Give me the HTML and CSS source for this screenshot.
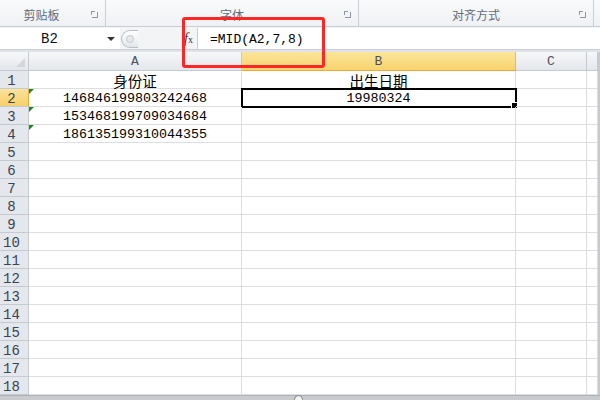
FILE: index.html
```html
<!DOCTYPE html>
<html lang="zh">
<head>
<meta charset="utf-8">
<link rel="stylesheet" href="styles.css">
</head>
<body>
<div class="app">
  <div class="ribbon">
    <div class="grp g1"><span class="glabel">剪贴板</span><span class="launch"></span></div>
    <div class="grp g2"><span class="glabel">字体</span><span class="launch"></span></div>
    <div class="grp g3"><span class="glabel">对齐方式</span><span class="launch"></span></div>
    <div class="grp g4"></div>
  </div>
  <div class="fbar">
    <div class="namebox"><span class="nbtext">B2</span><span class="caret"></span></div>
    <div class="mid">
      <span class="grip"><span class="gripdot"></span></span>
      <span class="fx"><i>f</i><small>x</small></span>
    </div>
    <div class="formula">=MID(A2,7,8)</div>
  </div>
  <div class="gap"></div>
  <div class="sheet">
    <div class="corner"></div><div class="ch">A</div><div class="ch sel">B</div><div class="ch">C</div><div class="ch"></div>

    <div class="rh">1</div><div class="c cj">身份证</div><div class="c cj">出生日期</div><div class="c"></div><div class="c"></div>
    <div class="rh sel">2</div><div class="c num tri">146846199803242468</div><div class="c num active">19980324</div><div class="c"></div><div class="c"></div>
    <div class="rh">3</div><div class="c num tri">153468199709034684</div><div class="c"></div><div class="c"></div><div class="c"></div>
    <div class="rh">4</div><div class="c num tri">186135199310044355</div><div class="c"></div><div class="c"></div><div class="c"></div>
    <div class="rh">5</div><div class="c"></div><div class="c"></div><div class="c"></div><div class="c"></div>
    <div class="rh">6</div><div class="c"></div><div class="c"></div><div class="c"></div><div class="c"></div>
    <div class="rh">7</div><div class="c"></div><div class="c"></div><div class="c"></div><div class="c"></div>
    <div class="rh">8</div><div class="c"></div><div class="c"></div><div class="c"></div><div class="c"></div>
    <div class="rh">9</div><div class="c"></div><div class="c"></div><div class="c"></div><div class="c"></div>
    <div class="rh">10</div><div class="c"></div><div class="c"></div><div class="c"></div><div class="c"></div>
    <div class="rh">11</div><div class="c"></div><div class="c"></div><div class="c"></div><div class="c"></div>
    <div class="rh">12</div><div class="c"></div><div class="c"></div><div class="c"></div><div class="c"></div>
    <div class="rh">13</div><div class="c"></div><div class="c"></div><div class="c"></div><div class="c"></div>
    <div class="rh">14</div><div class="c"></div><div class="c"></div><div class="c"></div><div class="c"></div>
    <div class="rh">15</div><div class="c"></div><div class="c"></div><div class="c"></div><div class="c"></div>
    <div class="rh">16</div><div class="c"></div><div class="c"></div><div class="c"></div><div class="c"></div>
    <div class="rh">17</div><div class="c"></div><div class="c"></div><div class="c"></div><div class="c"></div>
    <div class="rh">18</div><div class="c"></div><div class="c"></div><div class="c"></div><div class="c"></div>
  </div>
  <div class="bottom"><span class="knob"></span></div>
  <div class="redbox"></div>
</div>
</body>
</html>
```

FILE: styles.css
```css
* { box-sizing: border-box; }
html, body { margin: 0; padding: 0; background: #fff; }
.app {
  position: relative;
  width: 600px;
  height: 400px;
  overflow: hidden;
  font-family: "Liberation Mono", monospace;
}

/* ribbon */
.ribbon {
  display: flex;
  height: 27px;
  background: linear-gradient(#f9fafb, #eff1f4);
  border-bottom: 1px solid #c9ced6;
}
.grp {
  position: relative;
  display: flex;
  align-items: center;
  justify-content: center;
  border-right: 1px solid #c9ced6;
  height: 100%;
}
.g1 { width: 106px; padding-right: 22px; }
.g2 { width: 253px; }
.g3 { width: 235px; }
.g4 { flex: 1; border-right: none; }
.glabel {
  font-family: "Noto Sans CJK SC", sans-serif;
  font-size: 12px;
  color: #5f6b7c;
  margin-top: 2px;
}
.launch {
  position: absolute;
  right: 7px;
  top: 12px;
  width: 6px;
  height: 6px;
  border-right: 1px solid #8d96a3;
  border-bottom: 1px solid #8d96a3;
}
.launch::before {
  content: "";
  position: absolute;
  left: -1px;
  top: -1px;
  width: 3px;
  height: 3px;
  border-left: 1px solid #8d96a3;
  border-top: 1px solid #8d96a3;
}

/* formula bar */
.fbar {
  display: flex;
  height: 23px;
  background: #f3f4f6;
  padding-top: 1px;
  border-bottom: 1px solid #c9ced6;
}
.namebox {
  position: relative;
  width: 120px;
  background: #fff;
  display: flex;
  align-items: center;
  padding-left: 41px;
}
.nbtext { font-size: 14px; color: #111; padding-top: 1px; }
.caret {
  position: absolute;
  right: 5px;
  top: 9px;
  width: 0; height: 0;
  border-left: 4px solid transparent;
  border-right: 4px solid transparent;
  border-top: 4px solid #333;
}
.mid {
  width: 77px;
  display: flex;
  align-items: center;
  position: relative;
}
.grip {
  margin-left: 1px;
  width: 17px;
  height: 18px;
  border-radius: 9px 0 0 9px;
  border: 1px solid #b8bec8;
  border-right: none;
  background: linear-gradient(#ffffff, #e3e6ea);
  display: flex;
  align-items: center;
  justify-content: center;
}
.gripdot {
  width: 8px; height: 8px; border-radius: 50%;
  background: #e6e9ec;
  border: 1px solid #c5cad1;
}
.fx {
  margin-left: auto;
  margin-right: 4px;
  font-family: "Liberation Serif", serif;
  font-size: 14px;
  color: #333;
  line-height: 1;
}
.fx small { font-size: 10px; }
.formula {
  flex: 1;
  background: #fff;
  border-left: 1px solid #c9ced6;
  font-size: 13px;
  color: #000;
  padding-left: 12px;
  padding-top: 1px;
  display: flex;
  align-items: center;
}
.gap { height: 2px; background: #dfe3e8; }

/* sheet */
.sheet {
  display: grid;
  grid-template-columns: 29px 213px 274px 71px 11px;
  grid-template-rows: 19px;
  grid-auto-rows: 18px;
  width: 600px;
  border-right: 2px solid #c6c9cd;
}
.corner, .ch, .rh {
  background: linear-gradient(#f6f7f9, #e4e7eb);
  border-right: 1px solid #c5cad2;
  border-bottom: 1px solid #c5cad2;
}
.corner { position: relative; }
.corner::after {
  content: "";
  position: absolute;
  right: 3px; bottom: 3px;
  width: 0; height: 0;
  border-left: 9px solid transparent;
  border-bottom: 9px solid #d3d7dc;
}
.ch {
  display: flex;
  align-items: center;
  justify-content: center;
  font-size: 13px;
  color: #4a5260;
  padding-top: 1px;
}
.rh {
  display: flex;
  align-items: center;
  justify-content: center;
  padding-right: 5px;
  padding-top: 2px;
  font-size: 14px;
  color: #3a4452;
  background: #e4e7ec;
}
.ch.sel {
  background: linear-gradient(#fbe59a, #f8d36e);
  border-bottom-color: #e9a93d;
  border-right-color: #e9b45a;
}
.rh.sel {
  background: linear-gradient(#fbe39a, #f6cf6a);
  border-right-color: #e9a93d;
}
.c {
  position: relative;
  border-right: 1px solid #dcdfe2;
  border-bottom: 1px solid #dcdfe2;
  display: flex;
  align-items: center;
  justify-content: center;
  color: #000;
  white-space: nowrap;
}
.cj {
  font-family: "Noto Sans CJK SC", sans-serif;
  font-size: 14.5px;
  padding-top: 1px;
}
.num { font-size: 13.33px; padding-top: 2px; }
.tri::before {
  content: "";
  position: absolute;
  left: 0; top: 0;
  width: 0; height: 0;
  border-top: 5px solid #1a8a1a;
  border-right: 5px solid transparent;
}
.active {
  outline: 2px solid #000;
  outline-offset: -1px;
}
.active::after {
  content: "";
  position: absolute;
  right: -3px; bottom: -3px;
  width: 5px; height: 5px;
  background: #000;
  border: 1px solid #fff;
}

/* bottom */
.bottom {
  position: relative;
  height: 6px;
  background: #c8cacd;
  border-top: 1px solid #b0b3b7;
}
.knob {
  position: absolute;
  left: 294px; top: -1px;
  width: 9px; height: 9px;
  border-radius: 50%;
  border: 1px solid #7d8187;
  background: #f2f2f2;
}

/* annotation */
.redbox {
  position: absolute;
  left: 182px;
  top: 17px;
  width: 143px;
  height: 51px;
  border: 3px solid #ff2626;
  border-radius: 3px;
}
```
